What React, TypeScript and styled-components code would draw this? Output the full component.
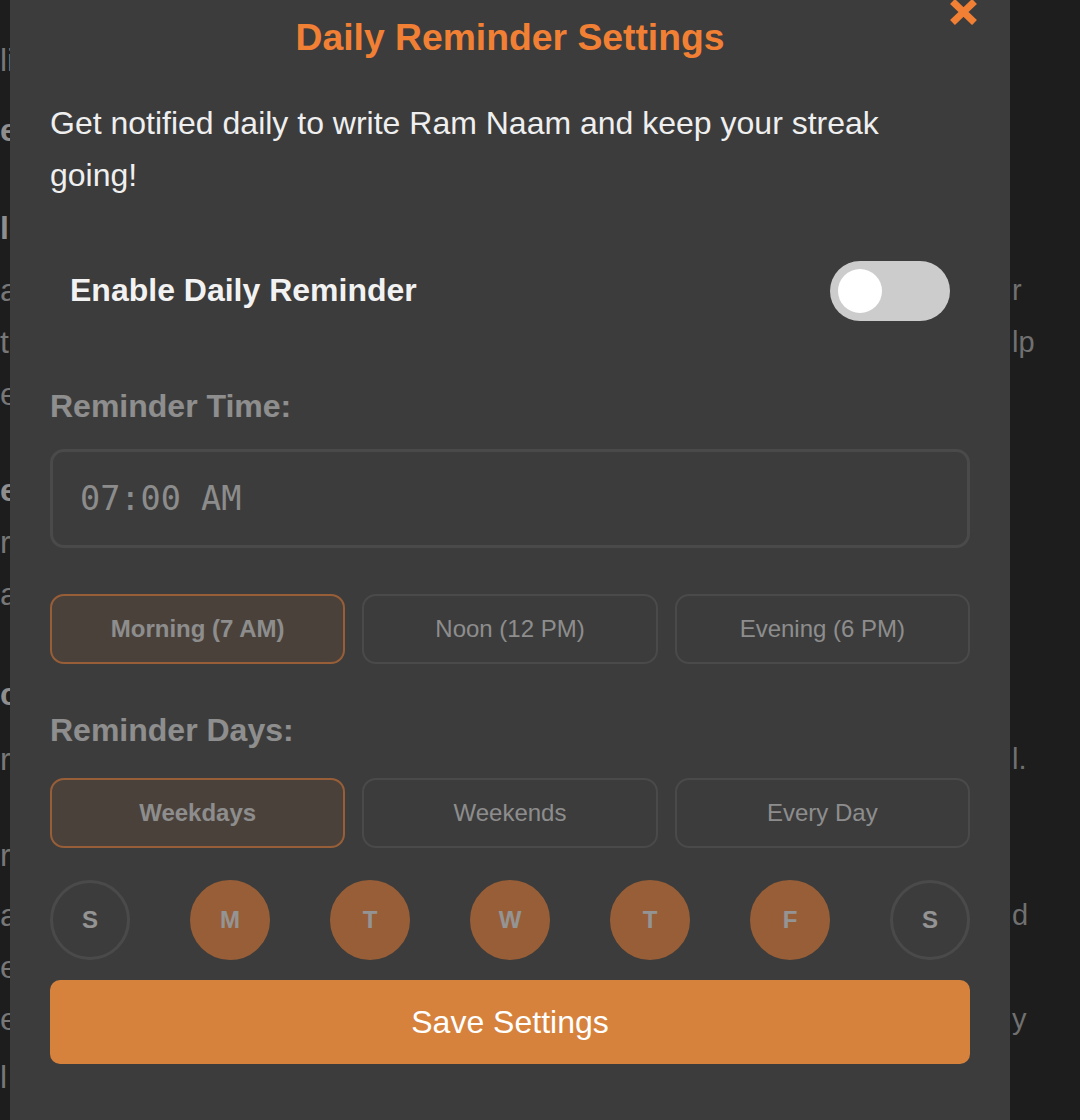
import React from "react";
import styled, { createGlobalStyle } from "styled-components";

const Global = createGlobalStyle`
  html, body {
    margin: 0;
    padding: 0;
    background: #1d1d1d;
  }
  body {
    font-family: "Liberation Sans", Arial, Helvetica, sans-serif;
    overflow: hidden;
  }
`;

const Page = styled.div`
  position: relative;
  width: 1080px;
  height: 1120px;
  overflow: hidden;
  background: #1d1d1d;
`;

const Article = styled.div`
  display: flex;
  flex-direction: column;
  padding-top: 34px;
  font-size: 32px;
`;

const ArticleLine = styled.div<{ $gap: number; $bold?: boolean }>`
  display: grid;
  grid-template-columns: 1012px 1fr;
  height: 52px;
  line-height: 52px;
  margin-top: ${(p) => p.$gap}px;
  font-weight: ${(p) => (p.$bold ? 700 : 400)};
  color: ${(p) => (p.$bold ? "#8e8e8e" : "#777777")};
  white-space: nowrap;
`;

const RightFragment = styled.span`
  font-size: 29px;
  color: #707070;
`;

const Modal = styled.div`
  position: absolute;
  left: 10px;
  top: 0;
  width: 1000px;
  height: 1120px;
  box-sizing: border-box;
  padding: 16px 40px 0;
  background: #3c3c3c;
  display: flex;
  flex-direction: column;
`;

const Title = styled.h2`
  margin: 0;
  text-align: center;
  font-size: 37.3px;
  line-height: 42.5px;
  font-weight: 700;
  color: #f28034;
`;

const CloseButton = styled.button`
  position: absolute;
  top: -1px;
  right: 33px;
  width: 27px;
  height: 26px;
  padding: 0;
  border: none;
  background: transparent;
  display: flex;
  cursor: pointer;
`;

const Description = styled.p`
  margin: 38px 0 0;
  font-size: 32px;
  line-height: 52px;
  color: #efefef;
`;

const ToggleRow = styled.div`
  margin-top: 60px;
  padding: 0 20px;
  display: flex;
  align-items: center;
  justify-content: space-between;
`;

const ToggleLabel = styled.span`
  font-size: 32px;
  font-weight: 700;
  color: #f2f2f2;
`;

const Switch = styled.div<{ $on: boolean }>`
  width: 120px;
  height: 60px;
  box-sizing: border-box;
  padding: 8px;
  border-radius: 30px;
  background: ${(p) => (p.$on ? "#f28034" : "#cccccc")};
  display: flex;
  justify-content: ${(p) => (p.$on ? "flex-end" : "flex-start")};
`;

const Knob = styled.div`
  width: 44px;
  height: 44px;
  border-radius: 50%;
  background: #ffffff;
`;

const Settings = styled.div<{ $disabled: boolean }>`
  margin-top: 67px;
  display: flex;
  flex-direction: column;
  opacity: ${(p) => (p.$disabled ? 0.5 : 1)};
`;

const SectionLabel = styled.div<{ $top: number; $bottom: number }>`
  margin-top: ${(p) => p.$top}px;
  margin-bottom: ${(p) => p.$bottom}px;
  font-size: 32px;
  line-height: 1.15;
  font-weight: 700;
  color: #e0e0e0;
`;

const TimeBox = styled.div`
  height: 99px;
  box-sizing: border-box;
  border: 3px solid #585858;
  border-radius: 14px;
  padding-left: 27px;
  display: flex;
  align-items: center;
  font-family: "DejaVu Sans Mono", "Liberation Mono", monospace;
  font-size: 33.5px;
  color: #dcdcdc;
`;

const PresetRow = styled.div<{ $top: number }>`
  margin-top: ${(p) => p.$top}px;
  display: grid;
  grid-template-columns: repeat(3, 1fr);
  gap: 17px;
`;

const PresetButton = styled.button<{ $active: boolean }>`
  height: 70px;
  box-sizing: border-box;
  border-radius: 14px;
  border: 2px solid ${(p) => (p.$active ? "#f28034" : "#585858")};
  background: ${(p) => (p.$active ? "rgba(242, 128, 52, 0.16)" : "transparent")};
  color: #dedede;
  font-family: "Liberation Sans", Arial, sans-serif;
  font-size: 24px;
  font-weight: ${(p) => (p.$active ? 700 : 400)};
  padding: 0;
`;

const DaysRow = styled.div`
  margin-top: 32px;
  display: flex;
  justify-content: space-between;
`;

const DayCircle = styled.div<{ $active: boolean }>`
  width: 80px;
  height: 80px;
  box-sizing: border-box;
  border-radius: 50%;
  border: 3px solid ${(p) => (p.$active ? "#f28034" : "#585858")};
  background: ${(p) => (p.$active ? "#f28034" : "transparent")};
  display: flex;
  align-items: center;
  justify-content: center;
  font-size: 24px;
  font-weight: 700;
  color: #ececec;
`;

const SaveButton = styled.button`
  margin-top: 20px;
  height: 84px;
  border: none;
  border-radius: 10px;
  background: #d6823d;
  color: #ffffff;
  font-family: "Liberation Sans", Arial, sans-serif;
  font-size: 32px;
`;

const backdropLines: { gap: number; left: string; right?: string; bold?: boolean }[] = [
  { gap: 0, left: "li" },
  { gap: 18, left: "e", bold: true },
  { gap: 46, left: "ld", bold: true },
  { gap: 10, left: "a", right: "r" },
  { gap: 0, left: "t", right: "lp" },
  { gap: 0, left: "e" },
  { gap: 44, left: "e", bold: true },
  { gap: 0, left: "r" },
  { gap: 0, left: "ar" },
  { gap: 48, left: "c", bold: true },
  { gap: 13, left: "r", right: "l." },
  { gap: 44, left: "r" },
  { gap: 8, left: "a", right: "d" },
  { gap: 0, left: "et" },
  { gap: 0, left: "ea", right: "y" },
  { gap: 6, left: "l" },
];

const times = [
  { label: "Morning (7 AM)", active: true },
  { label: "Noon (12 PM)", active: false },
  { label: "Evening (6 PM)", active: false },
];

const dayPresets = [
  { label: "Weekdays", active: true },
  { label: "Weekends", active: false },
  { label: "Every Day", active: false },
];

const days = [
  { label: "S", active: false },
  { label: "M", active: true },
  { label: "T", active: true },
  { label: "W", active: true },
  { label: "T", active: true },
  { label: "F", active: true },
  { label: "S", active: false },
];

export default function App() {
  const enabled = false;
  return (
    <Page>
      <Global />
      <Article>
        {backdropLines.map((l, i) => (
          <ArticleLine key={i} $gap={l.gap} $bold={l.bold}>
            <span>{l.left}</span>
            <RightFragment>{l.right ?? ""}</RightFragment>
          </ArticleLine>
        ))}
      </Article>
      <Modal>
        <CloseButton aria-label="Close">
          <svg width="27" height="26" viewBox="0 0 27 26">
            <path
              d="M2.5 2.5 L24.5 23.5 M24.5 2.5 L2.5 23.5"
              stroke="#f28034"
              strokeWidth="7"
              fill="none"
            />
          </svg>
        </CloseButton>
        <Title>Daily Reminder Settings</Title>
        <Description>
          Get notified daily to write Ram Naam and keep your streak going!
        </Description>
        <ToggleRow>
          <ToggleLabel>Enable Daily Reminder</ToggleLabel>
          <Switch $on={enabled}>
            <Knob />
          </Switch>
        </ToggleRow>
        <Settings $disabled={!enabled}>
          <SectionLabel $top={0} $bottom={25}>
            Reminder Time:
          </SectionLabel>
          <TimeBox>07:00 AM</TimeBox>
          <PresetRow $top={46}>
            {times.map((t) => (
              <PresetButton key={t.label} $active={t.active}>
                {t.label}
              </PresetButton>
            ))}
          </PresetRow>
          <SectionLabel $top={48} $bottom={29}>
            Reminder Days:
          </SectionLabel>
          <PresetRow $top={0}>
            {dayPresets.map((d) => (
              <PresetButton key={d.label} $active={d.active}>
                {d.label}
              </PresetButton>
            ))}
          </PresetRow>
          <DaysRow>
            {days.map((d, i) => (
              <DayCircle key={i} $active={d.active}>
                {d.label}
              </DayCircle>
            ))}
          </DaysRow>
        </Settings>
        <SaveButton>Save Settings</SaveButton>
      </Modal>
    </Page>
  );
}
